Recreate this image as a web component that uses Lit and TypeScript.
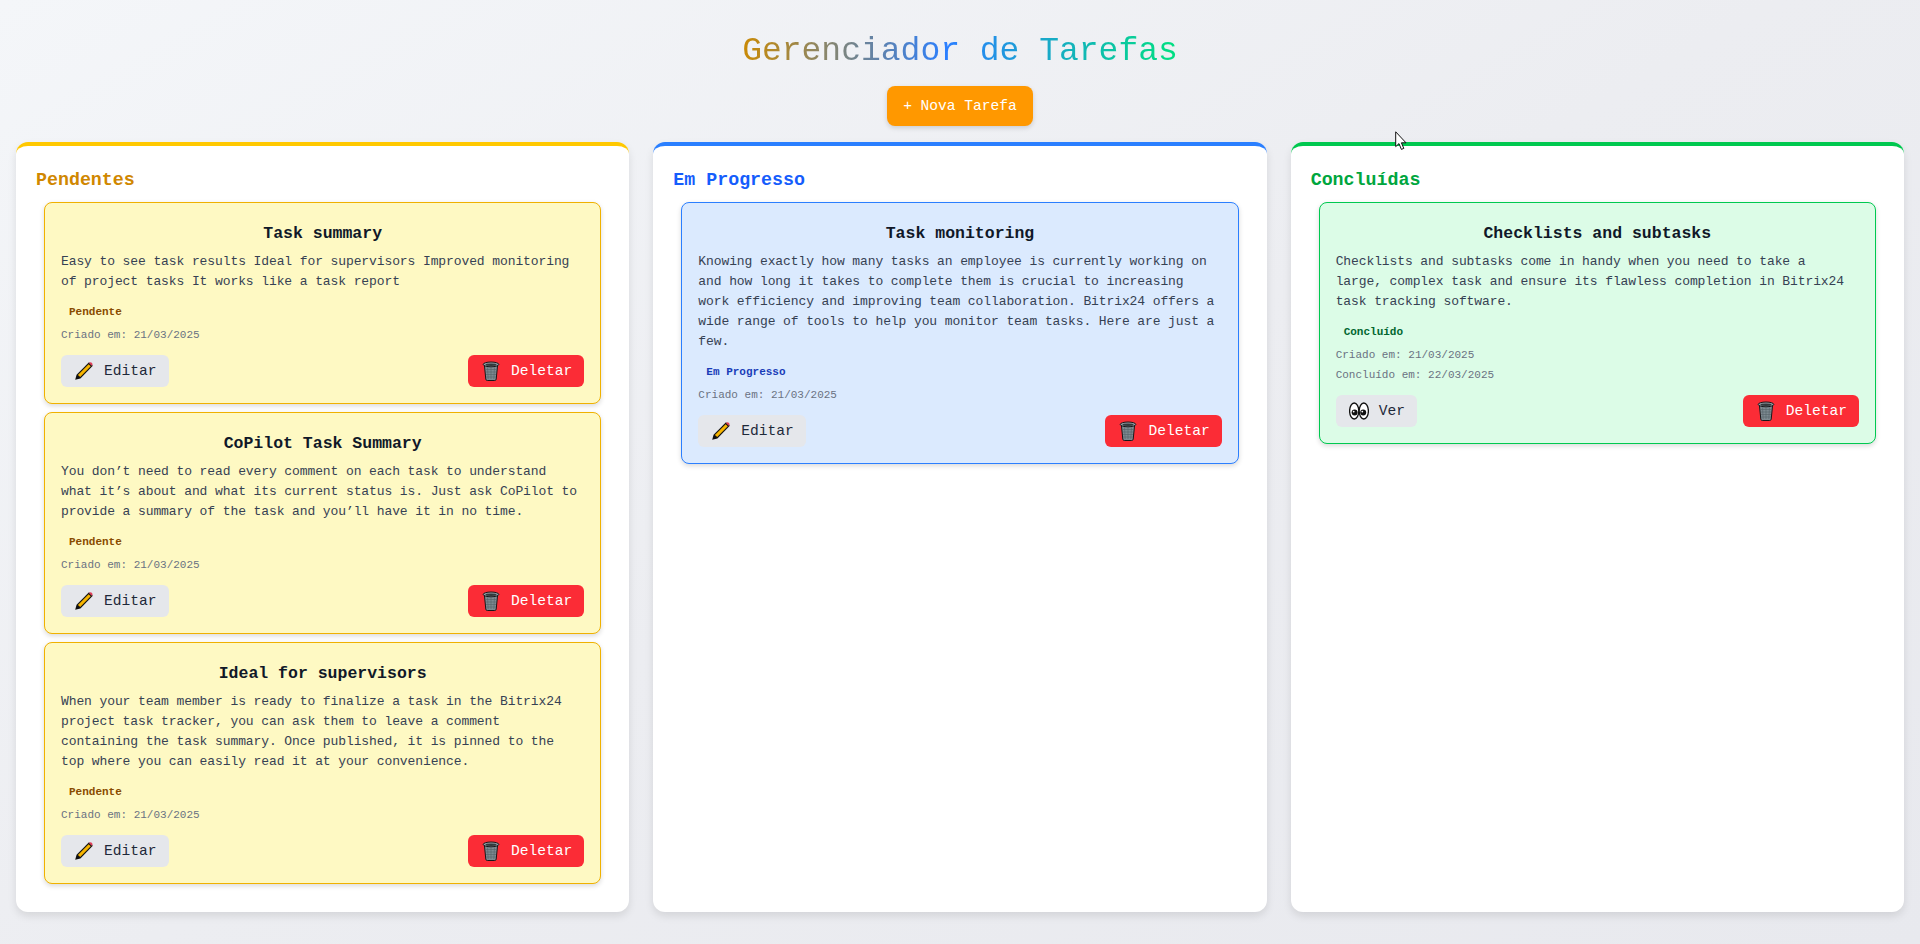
import { LitElement, css, html, nothing, svg } from "lit";
import { customElement } from "lit/decorators.js";

type Status = "pending" | "progress" | "done";

interface Task {
  title: string;
  body: string;
  status: Status;
  created: string;
  finished?: string;
}

const LABELS: Record<Status, string> = {
  pending: "Pendente",
  progress: "Em Progresso",
  done: "Concluído",
};

const TASKS: Task[] = [
  {
    title: "Task summary",
    body: "Easy to see task results Ideal for supervisors Improved monitoring of project tasks It works like a task report",
    status: "pending",
    created: "21/03/2025",
  },
  {
    title: "CoPilot Task Summary",
    body: "You don’t need to read every comment on each task to understand what it’s about and what its current status is. Just ask CoPilot to provide a summary of the task and you’ll have it in no time.",
    status: "pending",
    created: "21/03/2025",
  },
  {
    title: "Ideal for supervisors",
    body: "When your team member is ready to finalize a task in the Bitrix24 project task tracker, you can ask them to leave a comment containing the task summary. Once published, it is pinned to the top where you can easily read it at your convenience.",
    status: "pending",
    created: "21/03/2025",
  },
  {
    title: "Task monitoring",
    body: "Knowing exactly how many tasks an employee is currently working on and how long it takes to complete them is crucial to increasing work efficiency and improving team collaboration. Bitrix24 offers a wide range of tools to help you monitor team tasks. Here are just a few.",
    status: "progress",
    created: "21/03/2025",
  },
  {
    title: "Checklists and subtasks",
    body: "Checklists and subtasks come in handy when you need to take a large, complex task and ensure its flawless completion in Bitrix24 task tracking software.",
    status: "done",
    created: "21/03/2025",
    finished: "22/03/2025",
  },
];

const COLUMNS: { status: Status; title: string }[] = [
  { status: "pending", title: "Pendentes" },
  { status: "progress", title: "Em Progresso" },
  { status: "done", title: "Concluídas" },
];

const pencil = svg`<svg class="ico" viewBox="0 0 20 20" aria-hidden="true">
  <path d="M15 1.2 18.8 4.8 6.4 17.4 1.2 18.8 2.6 13.8Z" fill="#111"/>
  <path d="M14.6 3.2 16.8 5.2 6.2 15.9 3.9 13.9Z" fill="#f7b500"/>
  <path d="M14.9 2.1 15.8 1.4Q16.6 1 17.4 1.6L18.3 2.5Q18.9 3.3 18.3 4.1L17.6 4.8Z" fill="#e0405a"/>
  <path d="M2.2 17.8 2.9 15.2 4.9 17.1Z" fill="#111"/>
</svg>`;

const trash = svg`<svg class="ico" viewBox="0 0 20 20" aria-hidden="true">
  <path d="M3.4 4.2 4.8 18.2Q5 19.5 6.3 19.5H13.7Q15 19.5 15.2 18.2L16.6 4.2Z" fill="#7d8a91" stroke="#16181a" stroke-width="1"/>
  <path d="M6.5 6.5 7.2 18M10 6.5V18M13.5 6.5 12.8 18M4.5 8.5H15.5M4.7 11H15.3M5 13.5H15M5.2 16H14.8" stroke="#566168" stroke-width=".6" fill="none"/>
  <ellipse cx="10" cy="3.4" rx="7.8" ry="2.4" fill="#939fa6" stroke="#16181a" stroke-width="1"/>
  <ellipse cx="10" cy="3.7" rx="5.6" ry="1.2" fill="#33393c"/>
</svg>`;

const eyes = svg`<svg class="ico" viewBox="0 0 20 20" aria-hidden="true">
  <ellipse cx="5.2" cy="10" rx="4.6" ry="8" fill="#fff" stroke="#111" stroke-width="1.3"/>
  <ellipse cx="14.8" cy="10" rx="4.6" ry="8" fill="#fff" stroke="#111" stroke-width="1.3"/>
  <circle cx="5.6" cy="11.6" r="3" fill="#111"/>
  <circle cx="14.2" cy="11.6" r="3" fill="#111"/>
  <circle cx="4.7" cy="10.6" r=".9" fill="#fff"/>
  <circle cx="13.3" cy="10.6" r=".9" fill="#fff"/>
</svg>`;

// mouse pointer that was caught in the capture
const cursor = svg`<svg class="cursor" viewBox="0 0 12 20" aria-hidden="true">
  <path d="M.7.8V15.6L4 12.6 6.4 18.4 8.8 17.4 6.4 11.8H11Z" fill="#fff" stroke="#111" stroke-width="1"/>
</svg>`;

@customElement("app-root")
export class AppRoot extends LitElement {
  static styles = css`
    :host {
      display: block;
      position: relative;
      min-height: 944px;
      box-sizing: border-box;
      padding: 16px 16px 32px;
      background: linear-gradient(150deg, #f4f6f9 0%, #ecedf1 50%, #e8e9ee 100%);
      font-family: "Liberation Mono", "DejaVu Sans Mono", monospace;
      color: #1f2937;
    }

    * {
      box-sizing: border-box;
    }

    header {
      display: flex;
      flex-direction: column;
      align-items: center;
    }

    h1 {
      margin: 15px 0 13px;
      font-size: 33px;
      line-height: 42px;
      font-weight: 400;
      background: linear-gradient(90deg, #ca8a04, #2b7fff 47%, #00e080);
      -webkit-background-clip: text;
      background-clip: text;
      color: transparent;
    }

    .new {
      height: 40px;
      padding: 0 16px;
      border: 0;
      border-radius: 8px;
      background: #ff9800;
      color: #fff;
      font: inherit;
      font-size: 14.6px;
      letter-spacing: -0.01px;
      box-shadow: 0 2px 5px rgb(0 0 0 / 15%);
    }

    .cursor {
      position: absolute;
      left: 1395px;
      top: 131px;
      width: 12px;
      height: 20px;
      z-index: 2;
    }

    .board {
      display: grid;
      grid-template-columns: repeat(3, 1fr);
      gap: 24px;
      margin-top: 16px;
    }

    .col {
      padding: 20px;
      border-top: 4px solid;
      border-radius: 12px;
      background: #fff;
      box-shadow: 0 4px 8px rgb(0 0 0 / 10%);
    }

    .col.pending {
      border-color: #ffc800;
    }

    .col.progress {
      border-color: #2a7fff;
    }

    .col.done {
      border-color: #00c84f;
    }

    h2 {
      margin: 0;
      font-size: 18.3px;
      line-height: 28px;
      font-weight: 700;
    }

    .pending h2 {
      color: #d08700;
    }

    .progress h2 {
      color: #155dfc;
    }

    .done h2 {
      color: #00a63e;
    }

    .card {
      margin: 8px;
      padding: 18px 16px 16px;
      border: 1px solid;
      border-radius: 8px;
      box-shadow: 0 2px 5px rgb(0 0 0 / 15%);
    }

    .card.pending {
      background: #fef9c3;
      border-color: #f0b100;
    }

    .card.progress {
      background: #dbeafe;
      border-color: #2b7fff;
    }

    .card.done {
      background: #dcfce7;
      border-color: #00c950;
    }

    h3 {
      margin: 0 0 5px;
      font-size: 16.5px;
      line-height: 26px;
      font-weight: 700;
      text-align: center;
      color: #101828;
    }

    p {
      margin: 0;
      font-size: 13px;
      line-height: 20px;
      letter-spacing: -0.1px;
      color: #364153;
    }

    .badge {
      display: inline-block;
      margin: 10px 0 5px;
      padding: 2px 8px;
      font-size: 11px;
      line-height: 16px;
      font-weight: 700;
    }

    .badge.pending {
      color: #894b00;
    }

    .badge.progress {
      color: #193cb8;
    }

    .badge.done {
      color: #016630;
    }

    small {
      display: block;
      margin-bottom: 4px;
      font-size: 11px;
      line-height: 16px;
      color: #6a7282;
    }

    .actions {
      display: flex;
      justify-content: space-between;
      margin-top: 12px;
    }

    button.act {
      display: inline-flex;
      align-items: center;
      gap: 10px;
      height: 32px;
      padding: 0 12px 0 13px;
      border: 0;
      border-radius: 6px;
      font: inherit;
      font-size: 14.6px;
      letter-spacing: -0.01px;
    }

    .act.plain {
      background: #e5e7eb;
      color: #1e2939;
    }

    .act.danger {
      background: #fb2c36;
      color: #fff;
    }

    .ico {
      width: 20px;
      height: 20px;
      flex: none;
    }
  `;

  private renderCard(task: Task) {
    const done = task.status === "done";
    return html`<article class="card ${task.status}">
      <h3>${task.title}</h3>
      <p>${task.body}</p>
      <span class="badge ${task.status}">${LABELS[task.status]}</span>
      <small>Criado em: ${task.created}</small>
      ${task.finished
        ? html`<small>Concluído em: ${task.finished}</small>`
        : nothing}
      <div class="actions">
        <button class="act plain">
          ${done ? eyes : pencil}${done ? "Ver" : "Editar"}
        </button>
        <button class="act danger">${trash}Deletar</button>
      </div>
    </article>`;
  }

  render() {
    return html`<header>
        <h1>Gerenciador de Tarefas</h1>
        <button class="new">+ Nova Tarefa</button>
      </header>
      <main class="board">
        ${COLUMNS.map(
          (col) => html`<section class="col ${col.status}">
            <h2>${col.title}</h2>
            ${TASKS.filter((t) => t.status === col.status).map((t) =>
              this.renderCard(t),
            )}
          </section>`,
        )}
      </main>
      ${cursor}`;
  }
}
